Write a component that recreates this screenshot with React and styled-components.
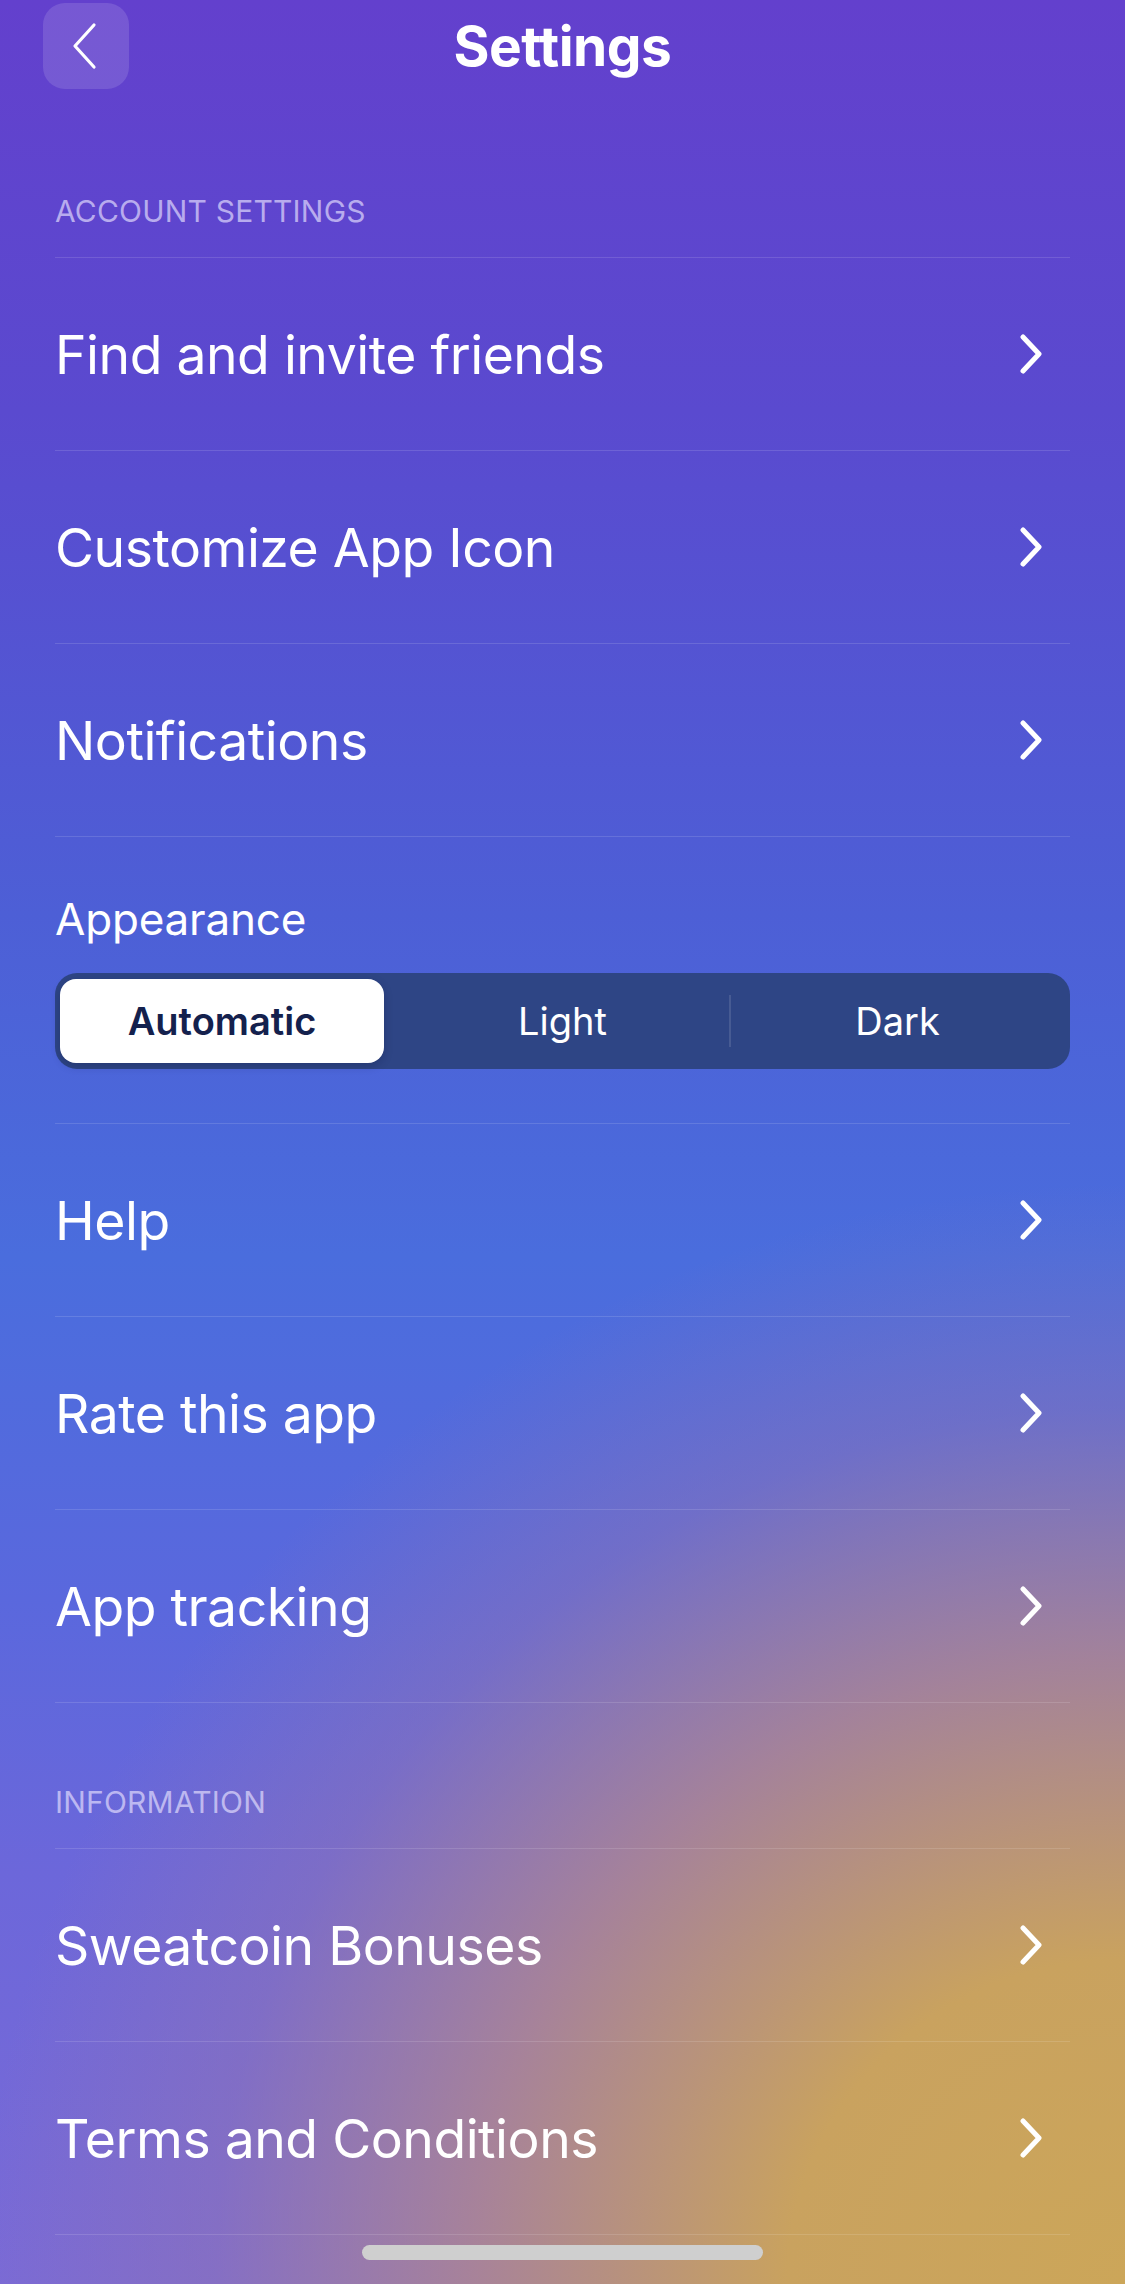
import React from 'react';
import styled, { createGlobalStyle } from 'styled-components';

const GlobalStyle = createGlobalStyle`
  html, body {
    margin: 0;
    padding: 0;
  }
  body {
    font-family: Inter, "Noto Sans", "Liberation Sans", sans-serif;
    color: #fff;
    -webkit-font-smoothing: antialiased;
  }
`;

// background: purple on top, blue in the middle, gold glow in the lower right
const Screen = styled.div`
  position: relative;
  width: 1125px;
  min-height: 2284px;
  box-sizing: border-box;
  overflow: hidden;
  background:
    radial-gradient(ellipse 1300px 1250px at 100% 100%, #cca659 0%, #c9a25f 26%, rgba(178, 136, 140, 0.82) 50%, rgba(150, 118, 170, 0.4) 70%, rgba(140, 120, 190, 0) 88%),
    linear-gradient(180deg, #6340cd 0%, #5a4acf 18%, #4d5fd6 40%, #4a6ddd 55%, #5a68dd 70%, #6c67da 82%, #7a6ad6 100%);
`;

const Header = styled.header`
  display: grid;
  grid-template-columns: 86px 1fr 86px;
  align-items: start;
  height: 112px;
  padding: 3px 43px 0;
  box-sizing: border-box;
`;

const BackButton = styled.button`
  width: 86px;
  height: 86px;
  border: 0;
  border-radius: 22px;
  background: rgba(255, 255, 255, 0.13);
  display: flex;
  align-items: center;
  justify-content: center;
  padding: 0 4px 0 0;
  cursor: pointer;
`;

const Title = styled.h1`
  margin: 0;
  text-align: center;
  font-size: 55px;
  line-height: 86px;
  font-weight: 700;
  letter-spacing: -0.5px;
  color: #fff;
`;

const List = styled.div`
  padding: 0 55px;
`;

const SectionLabel = styled.div`
  font-size: 30px;
  line-height: 36px;
  font-weight: 400;
  letter-spacing: 0.2px;
  color: rgba(232, 226, 255, 0.66);
  padding: 81px 0 28px;
  border-bottom: 1px solid rgba(255, 255, 255, 0.13);
`;

const Row = styled.div`
  display: flex;
  align-items: center;
  justify-content: space-between;
  height: 192px;
  border-bottom: 1px solid rgba(255, 255, 255, 0.13);
  padding-right: 28px;
`;

const RowText = styled.span`
  font-size: 53.5px;
  font-weight: 400;
  letter-spacing: -0.5px;
  color: #fff;
`;

const AppearanceBlock = styled.div`
  padding: 56px 0 54px;
  border-bottom: 1px solid rgba(255, 255, 255, 0.13);
`;

const BlockLabel = styled.div`
  font-size: 44px;
  line-height: 52px;
  letter-spacing: -0.2px;
  color: #fff;
  margin-bottom: 28px;
`;

const Segmented = styled.div`
  display: grid;
  grid-template-columns: repeat(3, 1fr);
  height: 96px;
  box-sizing: border-box;
  padding: 6px 5px;
  border-radius: 22px;
  background: #2e4585;
`;

const Segment = styled.div`
  position: relative;
  display: flex;
  align-items: center;
  justify-content: center;
  border-radius: 16px;
  font-size: 38px;
  font-weight: ${p => (p.$active ? 600 : 400)};
  color: ${p => (p.$active ? '#14214d' : '#fff')};
  background: ${p => (p.$active ? '#fff' : 'transparent')};
  margin-right: ${p => (p.$active ? '11px' : '0')};
  box-shadow: ${p => (p.$active ? '0 3px 8px rgba(10, 20, 60, 0.25)' : 'none')};

  &::before {
    content: '';
    display: ${p => (p.$divider ? 'block' : 'none')};
    position: absolute;
    left: -1px;
    top: 16px;
    bottom: 16px;
    width: 2px;
    background: rgba(255, 255, 255, 0.12);
  }
`;

const HomeIndicator = styled.div`
  position: absolute;
  left: 362px;
  bottom: 24px;
  width: 401px;
  height: 15px;
  border-radius: 8px;
  background: #cfcfcf;
`;

const Chevron = () => (
  <svg width="22" height="40" viewBox="0 0 22 40">
    <polyline points="3,3 19,20 3,37" fill="none" stroke="#fff" strokeWidth="5" strokeLinecap="round" strokeLinejoin="round" />
  </svg>
);

const BackIcon = () => (
  <svg width="28" height="48" viewBox="0 0 28 48">
    <polyline points="24,3 5,24 24,45" fill="none" stroke="#fff" strokeWidth="3.2" strokeLinecap="round" strokeLinejoin="round" />
  </svg>
);

const accountRows = ['Find and invite friends', 'Customize App Icon', 'Notifications'];
const moreRows = ['Help', 'Rate this app', 'App tracking'];
const infoRows = ['Sweatcoin Bonuses', 'Terms and Conditions'];
const modes = ['Automatic', 'Light', 'Dark'];

const SettingsRow = ({ label }) => (
  <Row>
    <RowText>{label}</RowText>
    <Chevron />
  </Row>
);

export default function App() {
  const mode = 0;
  return (
    <Screen>
      <GlobalStyle />
      <Header>
        <BackButton aria-label="Back">
          <BackIcon />
        </BackButton>
        <Title>Settings</Title>
        <div />
      </Header>
      <List>
        <SectionLabel>ACCOUNT SETTINGS</SectionLabel>
        {accountRows.map(r => <SettingsRow key={r} label={r} />)}
        <AppearanceBlock>
          <BlockLabel>Appearance</BlockLabel>
          <Segmented>
            {modes.map((m, i) => (
              <Segment
                key={m}
                $active={i === mode}
                $divider={i > 0 && i !== mode && i - 1 !== mode}
              >
                {m}
              </Segment>
            ))}
          </Segmented>
        </AppearanceBlock>
        {moreRows.map(r => <SettingsRow key={r} label={r} />)}
        <SectionLabel>INFORMATION</SectionLabel>
        {infoRows.map(r => <SettingsRow key={r} label={r} />)}
      </List>
      <HomeIndicator />
    </Screen>
  );
}
